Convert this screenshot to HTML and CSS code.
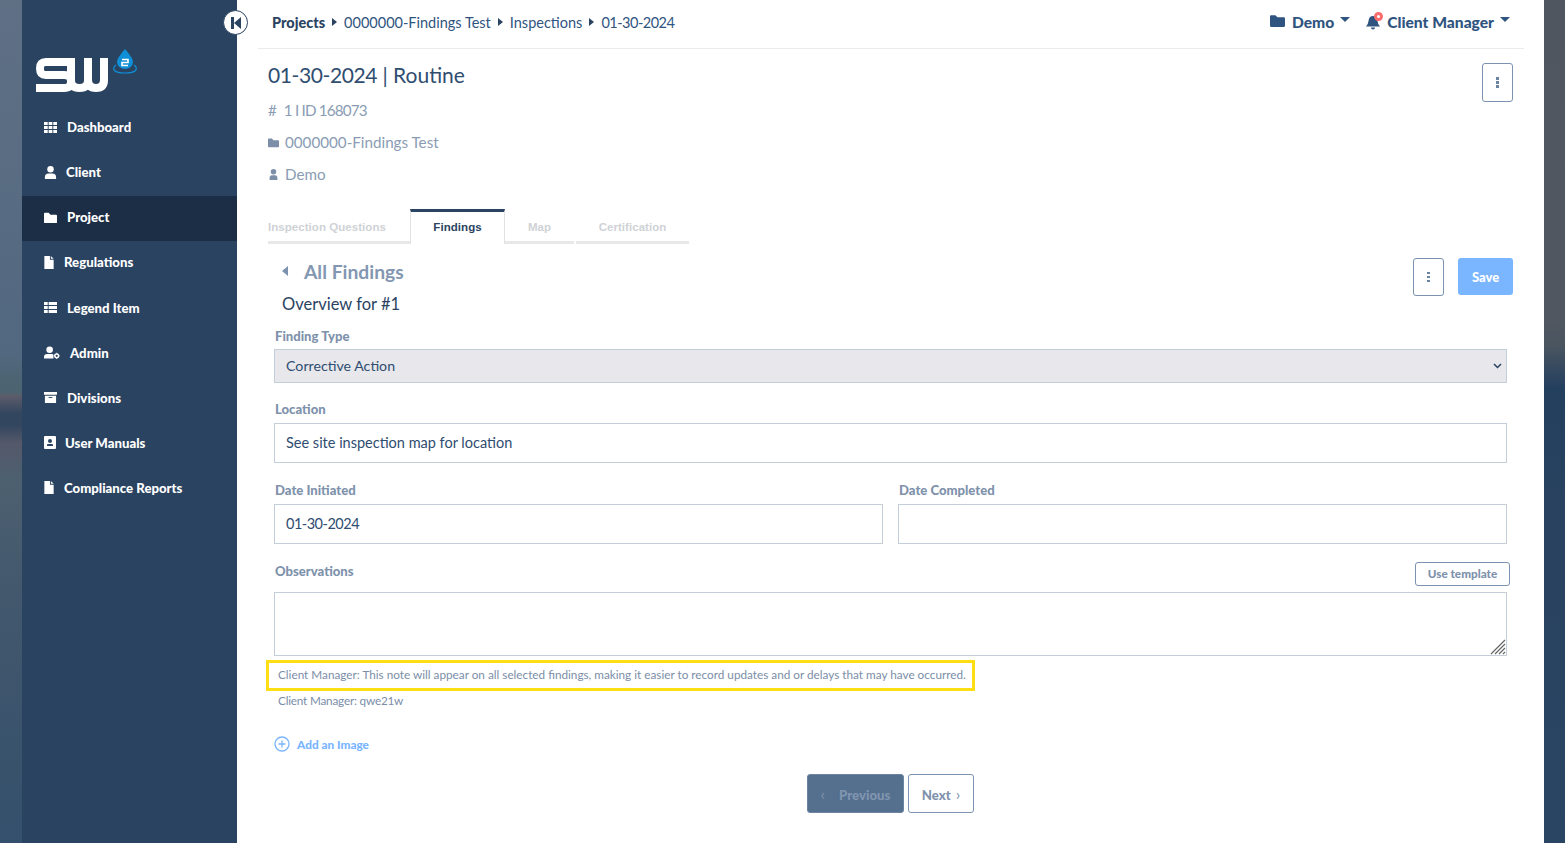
FILE: index.html
```html
<!DOCTYPE html>
<html lang="en">
<head>
<meta charset="utf-8">
<title>Findings</title>
<link rel="stylesheet" href="styles.css">
</head>
<body>
<div class="strip strip-left"></div>
<aside class="sidebar">
  <div class="logo">
    <svg width="104" height="46" viewBox="0 0 104 46">
      <path fill="none" stroke="#fff" stroke-width="8" d="M31 13H10Q4 13 4 19.500T10 26H28Q35 26 35 32.500T28 39H0"/>
      <path fill="none" stroke="#fff" stroke-width="8" d="M35 9V31Q35 39 43.500 39T52 31V9M52 31Q52 39 60 39T68 31V9"/>
      <path fill="#0e8fd6" d="M89 0Q97 9 97 13A8 7 0 0 1 81 13Q81 9 89 0Z"/>
      <path fill="none" stroke="#0e8fd6" stroke-width="1.200" d="M80 16C75 20 78 24 89 24S103 20 98 16"/>
      <path fill="none" stroke="#fff" stroke-width="1.600" d="M86 10.500H92V13.500H86V16.500H92"/>
    </svg>
  </div>
  <nav class="menu">
    <a class="item"><svg class="ico" viewBox="0 0 14 12"><path d="M0 0h4v3.400H0zM5 0h4v3.400H5zM10 0h4v3.400h-4zM0 4.300h4v3.400H0zM5 4.300h4v3.400H5zM10 4.300h4v3.400h-4zM0 8.600h4V12H0zM5 8.600h4V12H5zM10 8.600h4V12h-4z"/></svg><span class="t8">Dashboard</span></a>
    <a class="item"><svg class="ico" viewBox="0 0 14 14"><circle cx="7" cy="3.500" r="3.500"/><path d="M1 14v-2q0-4 4-4h4q4 0 4 4v2z"/></svg><span class="t6">Client</span></a>
    <a class="item active"><svg class="ico" viewBox="0 0 14 12"><path d="M0 2q0-1 1-1h4l2 2h6q1 0 1 1v7q0 1-1 1H1q-1 0-1-1z"/></svg><span class="t8">Project</span></a>
    <a class="item"><svg class="ico file" viewBox="0 0 10 14"><path d="M0 0h6v4h4v10H0zM7 0l3 3H7z"/></svg><span class="t9">Regulations</span></a>
    <a class="item"><svg class="ico" viewBox="0 0 14 12"><path d="M0 0h4v3.400H0zM5 0h9v3.400H5zM0 4.300h4v3.400H0zM5 4.300h9v3.400H5zM0 8.600h4V12H0zM5 8.600h9V12H5z"/></svg><span class="t8">Legend Item</span></a>
    <a class="item"><svg class="ico wide" viewBox="0 0 17 13"><circle cx="6" cy="3.500" r="3.500"/><path d="M0 13v-1.500Q0 8 3.500 8h5q1.500 0 1.500.5V13z"/><circle cx="13.500" cy="10" r="2" fill="none" stroke="#fff" stroke-width="1.600"/><path d="M13.500 6.800v1M13.500 12.200v1M10.500 10h1M15.500 10h1" stroke="#fff"/></svg><span class="t6b">Admin</span></a>
    <a class="item"><svg class="ico" viewBox="0 0 14 12"><path d="M0 0h14v3H0zM1 4h12v8H1z"/><path fill="#2a4361" d="M5 5.500h4v1H5z"/></svg><span class="t8">Divisions</span></a>
    <a class="item"><svg class="ico narrow" viewBox="0 0 12 13"><path fill-rule="evenodd" d="M1 0h10q1 0 1 1v11q0 1-1 1H1q-1 0-1-1V1q0-1 1-1zM6 3a2 2 0 1 0 0 4 2 2 0 0 0 0-4zM3 10h6V9q0-1-1-1H4q-1 0-1 1z"/></svg><span class="t6">User Manuals</span></a>
    <a class="item"><svg class="ico file" viewBox="0 0 10 14"><path d="M0 0h6v4h4v10H0zM7 0l3 3H7z"/></svg><span class="t9">Compliance Reports</span></a>
  </nav>
</aside>
<main class="main">
  <button class="collapse"><svg width="10" height="12" viewBox="0 0 10 12"><path fill="#2a4361" d="M0 0h3v12H0zM3 6l7-6v12z"/></svg></button>
  <header class="topbar">
    <div class="crumbs">
      <b>Projects</b><i class="arrow"></i><span>0000000-Findings Test</span><i class="arrow"></i><span>Inspections</span><i class="arrow"></i><span class="num">01-30-2024</span>
    </div>
    <div class="account">
      <svg class="folder" viewBox="0 0 14 12"><path d="M0 2q0-1 1-1h4l2 2h6q1 0 1 1v7q0 1-1 1H1q-1 0-1-1z"/></svg>
      <span class="acc-name">Demo</span><i class="caret"></i>
      <span class="bell-wrap">
        <svg class="bell" viewBox="0 0 14 15"><path d="M7 1q4 0 4.500 5 .2 3 2.500 5.500H0Q2.300 9 2.500 6 3 1 7 1zM5 12.500h4q0 2-2 2t-2-2z"/></svg>
        <span class="badge"></span>
      </span>
      <span class="acc-name">Client Manager</span><i class="caret"></i>
    </div>
  </header>

  <section class="head">
    <div class="head-text">
      <h1><span class="num">01-30-2024</span> | Routine</h1>
      <p class="meta"><span class="hash">#</span><span class="num-id">1 I ID 168073</span></p>
      <p class="meta"><svg class="meta-ico" viewBox="0 0 14 12"><path d="M0 2q0-1 1-1h4l2 2h6q1 0 1 1v7q0 1-1 1H1q-1 0-1-1z"/></svg>0000000-Findings Test</p>
      <p class="meta"><svg class="meta-ico" viewBox="0 0 14 14"><circle cx="7" cy="3.500" r="3.500"/><path d="M2 14v-2q0-4 3-4h4q3 0 3 4v2z"/></svg>Demo</p>
    </div>
    <button class="kebab"><i></i><i></i><i></i></button>
  </section>

  <div class="tabs">
    <a class="tab tab-q">Inspection Questions</a>
    <a class="tab tab-f">Findings</a>
    <a class="tab tab-m">Map</a>
    <a class="tab tab-c">Certification</a>
  </div>

  <section class="panel">
    <div class="panel-head">
      <div>
        <div class="back"><i class="back-arrow"></i>All Findings</div>
        <div class="overview">Overview for #1</div>
      </div>
      <div class="panel-actions">
        <button class="kebab small"><i></i><i></i><i></i></button>
        <button class="save">Save</button>
      </div>
    </div>

    <label class="lab lab-type">Finding Type</label>
    <div class="select">Corrective Action
      <svg width="9" height="6" viewBox="0 0 9 6"><path d="M1 1l3.500 3.500L8 1" fill="none" stroke="#2a4361" stroke-width="1.500"/></svg>
    </div>

    <label class="lab lab-loc">Location</label>
    <div class="input">See site inspection map for location</div>

    <div class="dates">
      <div><label class="lab">Date Initiated</label><div class="input"><span class="num-input">01-30-2024</span></div></div>
      <div><label class="lab">Date Completed</label><div class="input"></div></div>
    </div>

    <div class="obs-head"><label class="lab">Observations</label><button class="tpl">Use template</button></div>
    <div class="textarea">
      <svg class="grip" width="16" height="16" viewBox="0 0 16 16"><path d="M15 1L1 15M15 5L5 15M15 9L9 15M15 13l-2 2" stroke="#666" stroke-width="1.200"/></svg>
    </div>

    <div class="note-box">Client Manager: This note will appear on all selected findings, making it easier to record updates and or delays that may have occurred.</div>
    <div class="note">Client Manager: qwe21w</div>

    <a class="add"><svg width="16" height="16" viewBox="0 0 16 16"><circle cx="8" cy="8" r="7" fill="none" stroke="#7ab5ff" stroke-width="1.300"/><path d="M8 4.500v7M4.500 8h7" stroke="#7ab5ff" stroke-width="1.300"/></svg>Add an Image</a>

    <div class="pager">
      <button class="prev"><span class="chev">‹</span>Previous</button>
      <button class="next">Next<span class="chev2">›</span></button>
    </div>
  </section>
</main>
<div class="strip strip-right"></div>
</body>
</html>
```

FILE: styles.css
```css
* { box-sizing: border-box; }
html, body { height: 100%; }
body {
  margin: 0;
  height: 843px;
  overflow: hidden;
  display: flex;
  font-family: "Lato", "Open Sans", sans-serif;
  color: #2a4361;
  background: #fff;
}
.strip { width: 22px; flex: none; }
.strip-left {
  background: linear-gradient(180deg, #5f7085 0%, #526880 42%, #4d6473 45%, #4c6470 46.500%, #5c5c6a 47%, #33465f 49%, #33465f 50.500%, #54586a 52.500%, #4c6070 57%, #43586d 70%, #34506c 100%);
}
.strip-right {
  width: 21px;
  background: linear-gradient(180deg, #50565f 0%, #505760 38%, #4a5560 41%, #24405f 46%, #28425f 60%, #2a4563 100%);
}

.sidebar { width: 215px; flex: none; background: #2a4361; color: #fff; }
.logo { height: 105.600px; padding: 49px 0 0 14px; }
.menu { display: flex; flex-direction: column; }
.item {
  height: 45.100px;
  display: flex;
  align-items: center;
  padding: 0 0 2px 22px;
  font-size: 13.200px;
  font-weight: 900;
  color: #fff;
}
.item.active { background: #1c2e45; }
.ico { width: 13px; height: 13px; fill: #fff; flex: none; }
.ico.file { width: 10px; }
.ico.wide { width: 16px; }
.ico.narrow { width: 12px; }
.t8 { margin-left: 10px; }
.t6 { margin-left: 9px; }
.t6b { margin-left: 10px; }
.t9 { margin-left: 10px; }

.main { flex: 1; min-width: 0; background: #fff; position: relative; padding: 0 21px 0 21px; }
.collapse {
  position: absolute;
  left: -14px;
  top: 10px;
  width: 25px;
  height: 25px;
  border-radius: 50%;
  border: 1px solid #2a4361;
  background: #fff;
  padding: 0;
  display: flex;
  align-items: center;
  justify-content: center;
}
.topbar {
  height: 49px;
  width: 1266px;
  border-bottom: 1px solid #e9ebee;
  display: flex;
  justify-content: space-between;
  padding: 0 14px 4px;
  align-items: center;
}
.crumbs { display: flex; align-items: center; font-size: 14.500px; color: #2f5480; }
.crumbs b { color: #2a4361; font-weight: 900; font-size: 14.500px; }
.crumbs .num { letter-spacing: -.5px; }
.arrow { width: 0; height: 0; border-left: 5px solid #2a4361; border-top: 4px solid transparent; border-bottom: 4px solid transparent; margin: 0 7px; }
.account { display: flex; align-items: center; color: #2f5480; }
.folder { width: 15px; height: 13px; fill: #2f5480; margin: -4px 7px 0 0; }
.acc-name { font-weight: 900; font-size: 15.600px; }
.caret { width: 0; height: 0; border-top: 5px solid #2f5480; border-left: 5px solid transparent; border-right: 5px solid transparent; margin: -5px 0 0 6px; }
.bell-wrap { position: relative; margin: 0 7px 0 16px; display: flex; }
.bell { width: 14px; height: 15px; fill: #2f5480; }
.badge { position: absolute; top: -3px; right: -3px; width: 9px; height: 9px; border-radius: 50%; background: #fff; border: 3px solid #fb6b6b; }

.head { display: flex; justify-content: space-between; padding: 0 10px; height: 160px; }
h1 { margin: 12px 0 0; font-size: 21px; line-height: 28px; font-weight: 400; color: #2f4d70; }
h1 .num { letter-spacing: -.4px; }
.meta { margin: 0; height: 32px; display: flex; align-items: center; font-size: 15.200px; color: #8a9cb4; }
.head-text .meta:first-of-type { margin-top: 5px; }
.hash { margin-right: 7px; }
.num-id { letter-spacing: -.8px; }
.meta-ico { width: 11px; height: 11px; fill: #7d8fa8; margin-right: 6px; }
.kebab {
  width: 31px;
  height: 39px;
  margin-top: 14px;
  border: 1px solid #7b93b0;
  border-radius: 3px;
  background: #fff;
  display: flex;
  flex-direction: column;
  align-items: center;
  justify-content: center;
  gap: 1.500px;
  padding: 0;
}
.kebab i { width: 3px; height: 2.500px; background: #6c84a4; }
.kebab.small { height: 38px; margin: 0; }

.tabs { display: flex; margin-left: 10px; align-items: flex-end; height: 35px; font-size: 11.500px; font-weight: 700; font-family: "Liberation Sans", sans-serif; letter-spacing: .05px; }
.tab { height: 35px; display: flex; align-items: center; justify-content: center; color: #cfd2d6; border-bottom: 3px solid #e8e8e8; padding-top: 3px; }
.tab-q { width: 142px; justify-content: flex-start; }
.tab-f { width: 95px; color: #2a4361; border: 1px solid #e2e2e2; border-top: 3px solid #2a4361; border-bottom: 0; background: #fff; padding: 0 0 2px; }
.tab-m { width: 69px; margin-right: 2px; }
.tab-c { width: 113px; }

.panel { padding: 0 16px; }
.panel-head { display: flex; justify-content: space-between; padding-top: 14px; height: 84px; }
.back { display: flex; align-items: center; font-size: 19.300px; font-weight: 700; color: #8397b2; margin-left: 8px; height: 26px; }
.back-arrow { width: 0; height: 0; border-right: 6px solid #7d92ae; border-top: 5px solid transparent; border-bottom: 5px solid transparent; margin-right: 16px; }
.overview { font-size: 16.500px; margin: 9px 0 0 8px; line-height: 22px; color: #2a4361; }
.panel-actions { display: flex; gap: 14px; margin-right: -6px; }
.save { width: 55px; height: 37px; border: 0; border-radius: 3px; background: #7ab5ff; color: #fff; font: 900 13px "Lato", sans-serif; padding: 0; }

.lab { display: block; font-size: 13.100px; font-weight: 900; color: #7e92ac; line-height: 16px; padding-left: 1px; }
.lab-type { margin-bottom: 5px; }
.lab-loc { margin: 18px 0 6px; }
.select {
  height: 34px;
  background: #e7e7ec;
  border: 1px solid #c3ced9;
  display: flex;
  align-items: center;
  justify-content: space-between;
  padding: 0 4px 2px 11px;
  font-size: 14.200px;
  color: #2f4d70;
}
.select svg { margin-top: 2px; }
.input {
  height: 40px;
  border: 1px solid #c3ced9;
  display: flex;
  align-items: center;
  padding: 0 11px 2px;
  font-size: 14.500px;
  color: #2f4d70;
}
.num-input { letter-spacing: -.5px; }
.dates { display: grid; grid-template-columns: 1fr 1fr; gap: 15px; margin-top: 19px; }
.dates .lab { margin-bottom: 6px; }
.obs-head { display: flex; justify-content: space-between; align-items: flex-end; margin: 17px -3px 6px 0; height: 25px; }
.obs-head .lab { margin-bottom: 7px; }
.tpl { width: 95px; height: 24px; border: 1px solid #7b93b0; border-radius: 3px; background: #fff; font: 900 11.700px "Lato", sans-serif; color: #7e92ac; padding: 0 0 2px; }
.textarea { height: 64px; border: 1px solid #c3ced9; position: relative; }
.grip { position: absolute; right: 0; bottom: 0; }
.note-box {
  margin: 4px 0 0 -8px;
  width: 709px;
  height: 31px;
  border: 3px solid #ffdf14;
  display: flex;
  align-items: center;
  padding: 0 0 2px 9px;
  font-size: 11.750px;
  color: #7b8ea8;
  white-space: nowrap;
}
.note { font-size: 11.750px; color: #7b8ea8; margin: 2px 0 0 4px; line-height: 16px; height: 16px; letter-spacing: -.2px; }
.add { display: flex; align-items: center; gap: 7px; margin-top: 27px; font-size: 11.800px; font-weight: 900; color: #7ab5ff; height: 16px; }
.pager { display: flex; justify-content: center; gap: 4px; margin-top: 22px; }
.prev, .next { height: 39px; border-radius: 3px; font: 900 13.200px "Lato", sans-serif; padding: 0; }
.prev { width: 97px; background: #55708f; border: 1px solid #6c84a2; color: #8095b0; }
.next { width: 66px; background: #fff; border: 1px solid #7b93b0; color: #7e92ac; }
.chev { margin-right: 14px; font-weight: 400; font-size: 16px; }
.chev2 { margin-left: 5px; font-weight: 400; font-size: 16px; }
```
